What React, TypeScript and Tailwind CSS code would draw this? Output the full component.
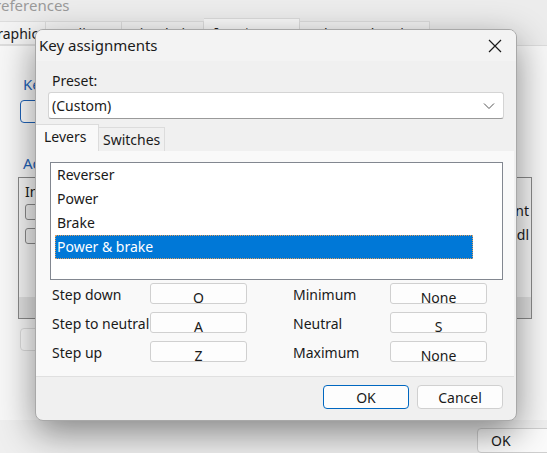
import React from "react";

const bindings = [
  { left: "Step down", leftKey: "O", right: "Minimum", rightKey: "None" },
  { left: "Step to neutral", leftKey: "A", right: "Neutral", rightKey: "S" },
  { left: "Step up", leftKey: "Z", right: "Maximum", rightKey: "None" },
];

const levers = ["Reverser", "Power", "Brake", "Power & brake"];

const KeyButton: React.FC<{ label: string }> = ({ label }) => (
  <div className="w-[97px] h-[21px] rounded-[3px] border border-[#d0d0d0] bg-[#fdfdfd] overflow-hidden flex justify-center">
    <span className="leading-[15px] pt-[6px] text-[14px] text-[#1a1a1a]">{label}</span>
  </div>
);

const App: React.FC = () => {
  return (
    <div
      className="relative w-[547px] h-[453px] overflow-hidden bg-[#ececec] text-[14px] text-[#1a1a1a]"
      style={{ fontFamily: '"Noto Sans", "Open Sans", sans-serif' }}
    >
      {/* parent window behind the dialog */}
      <div className="flex flex-col h-full">
        <div className="h-[18px] pl-0 -mt-[6px] text-[#9a9a9a] text-[15px] -ml-[14px] whitespace-nowrap">Preferences</div>
        <div className="flex items-end h-[27px] mt-[6px] -ml-[24px]">
          <div className="h-[24px] w-[70px] border border-[#dcdcdc] bg-[#f3f3f3] pl-[10px] text-[14px] leading-[24px]">Graphics</div>
          <div className="h-[24px] w-[76px] border border-l-0 border-[#dcdcdc] bg-[#f3f3f3] pl-[10px] leading-[24px]">Audio</div>
          <div className="h-[24px] w-[82px] border border-l-0 border-[#dcdcdc] bg-[#f3f3f3] pl-[10px] leading-[24px]">Simulation</div>
          <div className="h-[27px] w-[96px] border border-l-0 border-b-0 border-[#dcdcdc] bg-[#f9f9f9] pl-[10px] leading-[27px]">Input devices</div>
          <div className="h-[24px] w-[130px] border border-l-0 border-[#dcdcdc] bg-[#f3f3f3] pl-[10px] leading-[24px]">Advanced options</div>
        </div>
        <div className="flex-1 bg-[#f7f7f7] border-t border-[#dcdcdc] flex flex-col pl-[18px] pt-[28px]">
          <div className="pl-[5px] text-[#1f63b8] text-[15px] leading-[20px]">Key assignments</div>
          <div className="mt-[6px] ml-[2px] w-[90px] h-[23px] rounded-[4px] border border-[#1f63b8] bg-white" />
          <div className="mt-[30px] pl-[5px] text-[#1f63b8] text-[15px] leading-[20px]">Advanced</div>
          <div className="mt-[4px] w-[514px] h-[142px] border border-[#8a8a8a] flex flex-col">
            <div className="pl-[6px] pt-[4px] leading-[20px]">Input</div>
            <div className="flex flex-col gap-[8px] pl-[6px] pt-[2px]">
              <div className="flex justify-between pr-[2px]">
                <div className="w-[16px] h-[16px] rounded-[3px] border border-[#8a8a8a] bg-[#f0f0f0]" />
                <span className="leading-[16px] -mt-[1px]">Int</span>
              </div>
              <div className="flex justify-between pr-[2px]">
                <div className="w-[16px] h-[16px] rounded-[3px] border border-[#8a8a8a] bg-[#f0f0f0]" />
                <span className="leading-[16px] -mt-[1px]">dl</span>
              </div>
            </div>
            <div className="mt-auto h-[21px] bg-[#e2e2e2]" />
          </div>
          <div className="mt-[9px] ml-[2px] w-[90px] h-[23px] rounded-[4px] border border-[#dcdcdc] bg-[#fbfbfb]" />
        </div>
        <div className="h-[33px] bg-[#efefef] flex justify-end items-start pt-[8px] pr-[0px]">
          <div className="w-[80px] h-[25px] -mr-[10px] rounded-l-[4px] border border-[#cfcfcf] bg-[#fbfbfb] pl-[13px] text-[14px] leading-[23px]">OK</div>
        </div>
      </div>

      {/* Key assignments dialog */}
      <div className="absolute left-[35px] top-[29px] w-[482px] h-[392px] rounded-[8px] border border-[#a8a8a8] bg-[#f0f0f0] overflow-hidden shadow-[0_12px_36px_rgba(0,0,0,0.45)] flex flex-col">
        <div className="h-[31px] bg-[#f3f3f3] flex items-center justify-between pl-[3px] pr-[14px]">
          <span className="text-[15px]">Key assignments</span>
          <svg width="14" height="14" viewBox="0 0 14 14" className="mt-[1px]">
            <path d="M1 1 L13 13 M13 1 L1 13" stroke="#1a1a1a" strokeWidth="1.2" fill="none" />
          </svg>
        </div>
        <div className="pl-[16px] pt-[10px] leading-[20px]">Preset:</div>
        <div className="mx-[12px] mt-[1px] h-[27px] rounded-[3px] border border-[#d4d4d4] border-b-[#9a9a9a] bg-white flex items-center justify-between pl-[3px] pr-[8px]">
          <span>(Custom)</span>
          <svg width="12" height="8" viewBox="0 0 12 8">
            <path d="M1 1.5 L6 6.5 L11 1.5" stroke="#555" strokeWidth="1" fill="none" />
          </svg>
        </div>
        <div className="mt-[5px] flex items-end h-[27px]">
          <div className="h-[27px] w-[63px] bg-[#f9f9f9] border-t border-r border-[#dcdcdc] pl-[8px] leading-[24px]">Levers</div>
          <div className="h-[24px] w-[66px] border-t border-r border-[#dcdcdc] pl-[4px] leading-[24px]">Switches</div>
        </div>
        <div className="mr-[2px] h-[226px] bg-[#f9f9f9] border-b border-[#e0e0e0] flex flex-col pt-[11px]">
          <div className="ml-[14px] w-[453px] h-[118px] border border-[#828790] bg-white flex flex-col pl-[4px]">
            {levers.map((name, i) => (
              <div
                key={name}
                className={
                  i === levers.length - 1
                    ? "w-[418px] h-[24px] bg-[#0078d7] text-white pl-[2px] leading-[24px] outline-1 outline-dotted outline-[#e0a060] -outline-offset-1"
                    : "h-[24px] pl-[2px] leading-[24px]"
                }
              >
                {name}
              </div>
            ))}
          </div>
          <div className="flex flex-col gap-[8px] mt-[3px] pl-[16px]">
            {bindings.map((row) => (
              <div key={row.left} className="flex items-center h-[21px]">
                <span className="w-[98px] whitespace-nowrap leading-[20px] mt-[3px]">{row.left}</span>
                <KeyButton label={row.leftKey} />
                <span className="w-[143px] pl-[46px] leading-[20px] mt-[3px]">{row.right}</span>
                <KeyButton label={row.rightKey} />
              </div>
            ))}
          </div>
        </div>
        <div className="flex justify-end gap-[8px] pr-[13px] pt-[8px]">
          <div className="w-[86px] h-[24px] rounded-[4px] border border-[#0067c0] bg-[#fdfdfd] flex items-center justify-center">OK</div>
          <div className="w-[86px] h-[24px] rounded-[4px] border border-[#d0d0d0] bg-[#fdfdfd] flex items-center justify-center">Cancel</div>
        </div>
      </div>
    </div>
  );
};

export default App;
